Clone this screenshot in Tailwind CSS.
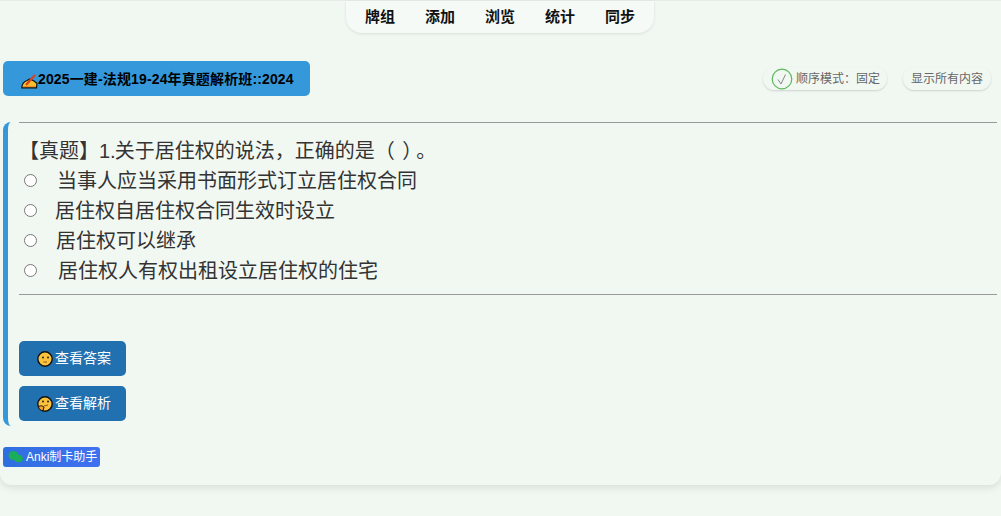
<!DOCTYPE html>
<html lang="zh">
<head>
<meta charset="utf-8">
<script src="https://cdn.jsdelivr.net/npm/@tailwindcss/browser@4"></script>
</head>
<body class="bg-[#f1f8f2] font-['Liberation_Sans','Noto_Sans_CJK_SC',sans-serif]">
<div class="w-[1001px] h-[516px] overflow-hidden">
  <div class="h-[485px] rounded-b-xl bg-[#f1f8f2] shadow-[0_2px_8px_rgba(0,0,0,0.12)] border-t border-[#e6ebe7]">
    <nav class="ml-[346px] flex h-[32px] w-[308px] items-center justify-center gap-[30px] rounded-b-2xl bg-[#f5faf6] text-[15px] font-bold text-[#111] shadow-[0_1px_3px_rgba(0,0,0,0.1)]">
      <span>牌组</span><span>添加</span><span>浏览</span><span>统计</span><span>同步</span>
    </nav>
    <div class="mt-[28px] flex items-center justify-between pl-[3px] pr-[10px]">
      <div class="flex h-[35px] w-[307px] items-center rounded-[5px] bg-[#3498db] pl-[18px] text-[14px] font-bold text-black">
        <svg class="mt-[4px] h-[16px] w-[17px] shrink-0" viewBox="0 0 17 16"><path d="M0.8 14.8 C1 11 3 8.5 6 7.5 L9 6 L13 8 L16 10.5 L15.5 14.8 Z" fill="#fbc02d" stroke="#111" stroke-width="1.2"/><path d="M5 12 L14 2" stroke="#d8431f" stroke-width="2.2"/><path d="M2 13.6 L15 13.2" stroke="#f08a1d" stroke-width="1"/></svg>
        <span class="pt-[1px] tracking-[0.14px]">2025一建-法规19-24年真题解析班::2024</span>
      </div>
      <div class="flex items-center gap-[16px] text-[12px] text-[#666]">
        <div class="flex h-[23px] w-[124px] items-center rounded-full pl-[8px] shadow-[0_1px_2px_rgba(0,0,0,0.15)]">
          <svg class="h-[22px] w-[22px] shrink-0" viewBox="0 0 22 22"><circle cx="11" cy="11" r="9.8" fill="none" stroke="#5cb85c" stroke-width="1.2"/><path d="M7 11.5 L10 16 L14.5 6.5" fill="none" stroke="#888" stroke-width="1"/></svg>
          <span class="ml-[3px]">顺序模式：固定</span>
        </div>
        <div class="flex h-[23px] w-[88px] items-center justify-center rounded-full shadow-[0_1px_2px_rgba(0,0,0,0.15)]">显示所有内容</div>
      </div>
    </div>
    <section class="relative mt-[26px] ml-[3px] h-[304px] rounded-l-lg border-l-[5px] border-[#3498db] pl-[11px] pr-[4px]">
      <hr class="border-t border-[#999]">
      <div class="mt-[12px] text-[20px] leading-[30px] text-[#333]">
        <p class="h-[30px] pt-[1px]">【真题】<span class="mr-[-1px]">1.</span>关于居住权的说法，正确的是（ <span class="ml-[2px] mr-[4px]">）</span>。</p>
        <div class="flex h-[30px] items-center"><input type="radio" name="q" class="ml-[5px] h-[13px] w-[13px]"><span class="mt-[2px] ml-[20px]">当事人应当采用书面形式订立居住权合同</span></div>
        <div class="flex h-[30px] items-center"><input type="radio" name="q" class="ml-[5px] h-[13px] w-[13px]"><span class="mt-[2px] ml-[18px]">居住权自居住权合同生效时设立</span></div>
        <div class="flex h-[30px] items-center"><input type="radio" name="q" class="ml-[5px] h-[13px] w-[13px]"><span class="mt-[2px] ml-[19px]">居住权可以继承</span></div>
        <div class="flex h-[30px] items-center"><input type="radio" name="q" class="ml-[5px] h-[13px] w-[13px]"><span class="mt-[2px] ml-[21px]">居住权人有权出租设立居住权的住宅</span></div>
      </div>
      <hr class="mt-[9px] border-t border-[#999]">
      <div class="mt-[46px] flex flex-col gap-[10px]">
        <button class="flex h-[35px] w-[107px] items-center rounded-[5px] bg-[#2170b0] pl-[18px] text-[14px] text-white">
          <svg class="h-[16px] w-[16px] shrink-0" viewBox="0 0 16 16"><circle cx="8" cy="8" r="7.2" fill="#fcc13d" stroke="#111" stroke-width="1.4"/><circle cx="6" cy="6.5" r="1" fill="#222"/><circle cx="11" cy="6.5" r="1" fill="#222"/><path d="M6.5 11 H10" stroke="#8a5a10" stroke-width="1"/></svg>
          <span class="ml-[2px]">查看答案</span>
        </button>
        <button class="flex h-[35px] w-[107px] items-center rounded-[5px] bg-[#2170b0] pl-[18px] text-[14px] text-white">
          <svg class="h-[16px] w-[16px] shrink-0" viewBox="0 0 16 16"><circle cx="8" cy="8" r="7.2" fill="#fcc13d" stroke="#111" stroke-width="1.4"/><circle cx="6" cy="5.5" r="1" fill="#222"/><circle cx="11" cy="5.5" r="1" fill="#222"/><path d="M7 10 L11 9" stroke="#8a5a10" stroke-width="1"/><path d="M1.5 11 C3 9 6 10 7 11 L6 14.5 C4 15 2 13 1.5 11 Z" fill="#f4a62a" stroke="#111" stroke-width="1"/></svg>
          <span class="ml-[2px]">查看解析</span>
        </button>
      </div>
    </section>
    <div class="mt-[21px] ml-[3px] flex h-[20px] w-[97px] items-center rounded-[3px] bg-gradient-to-r from-[#2f6fdf] to-[#4070f0] pl-[5px] text-[12px] text-white">
      <svg class="h-[14px] w-[15px] shrink-0" viewBox="0 0 15 14"><ellipse cx="5.5" cy="5.5" rx="5" ry="4.5" fill="#1aad5a"/><ellipse cx="10.5" cy="8.5" rx="4.3" ry="3.8" fill="#1aad5a"/></svg>
      <span class="ml-[3px]">Anki制卡助手</span>
    </div>
  </div>
</div>
</body>
</html>
